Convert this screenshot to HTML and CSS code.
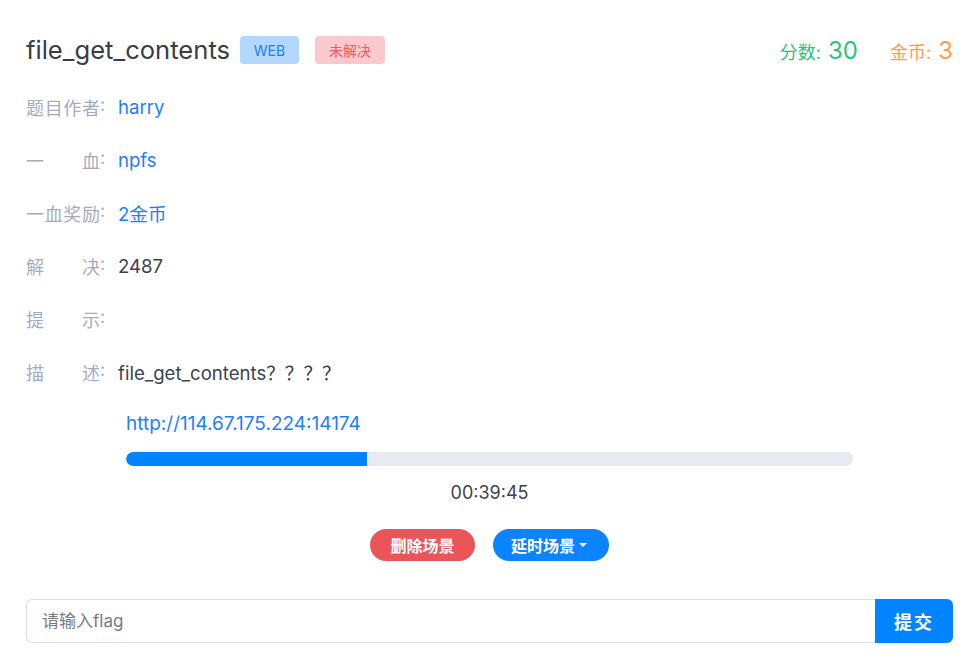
FILE: index.html
```html
<!DOCTYPE html>
<html lang="zh">
<head>
<meta charset="utf-8">
<link rel="stylesheet" href="styles.css">
</head>
<body>
<div class="page">
  <div class="header">
    <div class="title-wrap">
      <h1 class="title">file_get_contents</h1>
      <span class="badge badge-web">WEB</span>
      <span class="badge badge-unsolved">未解决</span>
    </div>
    <div class="stats">
      <span class="stat stat-score">分数: <b>30</b></span>
      <span class="stat stat-coin">金币: <b>3</b></span>
    </div>
  </div>

  <div class="info">
    <div class="row"><span class="label"><span class="lt">题目作者</span>:</span><span class="value link">harry</span></div>
    <div class="row"><span class="label"><span class="lt">一血</span>:</span><span class="value link">npfs</span></div>
    <div class="row"><span class="label"><span class="lt">一血奖励</span>:</span><span class="value link">2金币</span></div>
    <div class="row"><span class="label"><span class="lt">解决</span>:</span><span class="value">2487</span></div>
    <div class="row"><span class="label"><span class="lt">提示</span>:</span><span class="value"></span></div>
    <div class="row"><span class="label"><span class="lt">描述</span>:</span><span class="value">file_get_contents？？？？</span></div>
  </div>

  <div class="scene">
    <a class="url">http://114.67.175.224:14174</a>
    <div class="progress"><div class="progress-fill" style="width:33.2%"></div></div>
    <div class="timer">00:39:45</div>
    <div class="actions">
      <button class="btn btn-danger">删除场景</button>
      <button class="btn btn-primary">延时场景<span class="caret"></span></button>
    </div>
  </div>

  <div class="flag-form">
    <input class="flag-input" type="text" placeholder="请输入flag">
    <button class="flag-submit">提交</button>
  </div>
</div>
</body>
</html>
```

FILE: styles.css
```css
* { box-sizing: border-box; }
html, body { margin: 0; padding: 0; background: #fff; }
body {
  font-family: Inter, "Noto Sans CJK SC", sans-serif;
  color: #3d4250;
}
.page {
  width: 972px;
  padding: 24px 19px 0 26px;
}
.header {
  height: 52px;
  display: flex;
  align-items: center;
  justify-content: space-between;
}
.title-wrap {
  display: flex;
  align-items: center;
}
.title {
  margin: 0;
  font-size: 25.6px;
  font-weight: 400;
  color: #3a3d45;
  line-height: 32px;
}
.badge {
  display: inline-flex;
  align-items: center;
  justify-content: center;
  height: 28px;
  border-radius: 4px;
  font-size: 14px;
}
.badge-web {
  margin-left: 10px;
  width: 59px;
  background: #b3d8ff;
  color: #1c7ef5;
}
.badge-unsolved {
  margin-left: 16px;
  width: 70px;
  background: #f9c9cd;
  color: #ef5a5f;
}
.stats {
  display: flex;
  align-items: baseline;
  gap: 32px;
}
.stat { font-size: 18px; }
.stat b { font-weight: 400; font-size: 24px; margin-left: 2px; }
.stat-score { color: #2cc275; }
.stat-coin { color: #ff9c4f; }

.info { margin-top: 4px; }
.row {
  display: flex;
  align-items: center;
  height: 53px;
  font-size: 18px;
}
.label {
  display: flex;
  width: 92px;
  color: #a7abbe;
}
.lt {
  width: 74px;
  text-align: justify;
  text-align-last: justify;
}
.value { color: #3d4250; font-size: 18.6px; }
.link { color: #1e80ff; }

.scene {
  margin-left: 100px;
  width: 727px;
  padding-top: 12px;
}
.url {
  display: block;
  font-size: 19px;
  line-height: 28px;
  color: #1e80ff;
}
.progress {
  margin-top: 14px;
  height: 14px;
  border-radius: 7px;
  background: #e7eaee;
  overflow: hidden;
}
.progress-fill {
  height: 100%;
  background: #0084ff;
  border-radius: 7px 0 0 7px;
}
.timer {
  margin-top: 14px;
  text-align: center;
  font-size: 18px;
  line-height: 26px;
  color: #3d4250;
}
.actions {
  margin-top: 23px;
  display: flex;
  justify-content: center;
  gap: 18px;
}
.btn {
  height: 32px;
  border: none;
  border-radius: 16px;
  padding: 0 20px;
  color: #fff;
  font-family: Inter, "Noto Sans CJK SC", sans-serif;
  font-size: 16px;
  font-weight: 700;
  display: inline-flex;
  align-items: center;
}
.btn-danger { background: #ea555a; width: 105px; justify-content: center; }
.btn-primary { background: #0a84ff; width: 116px; padding: 0 18px; }
.caret {
  margin-left: 4px;
  width: 0;
  height: 0;
  border-left: 4px solid transparent;
  border-right: 4px solid transparent;
  border-top: 4px solid #fff;
}

.flag-form {
  margin-top: 38px;
  display: flex;
  height: 44px;
}
.flag-input {
  flex: 1;
  height: 44px;
  border: 1px solid #dcdfe4;
  border-right: none;
  border-radius: 6px 0 0 6px;
  padding: 0 15px;
  font-family: Inter, "Noto Sans CJK SC", sans-serif;
  font-size: 17px;
  color: #3d4250;
  outline: none;
}
.flag-input::placeholder { color: #777b85; }
.flag-submit {
  width: 78px;
  height: 44px;
  border: none;
  border-radius: 0 6px 6px 0;
  background: #0084ff;
  color: #fff;
  font-family: Inter, "Noto Sans CJK SC", sans-serif;
  font-size: 18px;
  font-weight: 700;
  letter-spacing: 2px;
}
```
